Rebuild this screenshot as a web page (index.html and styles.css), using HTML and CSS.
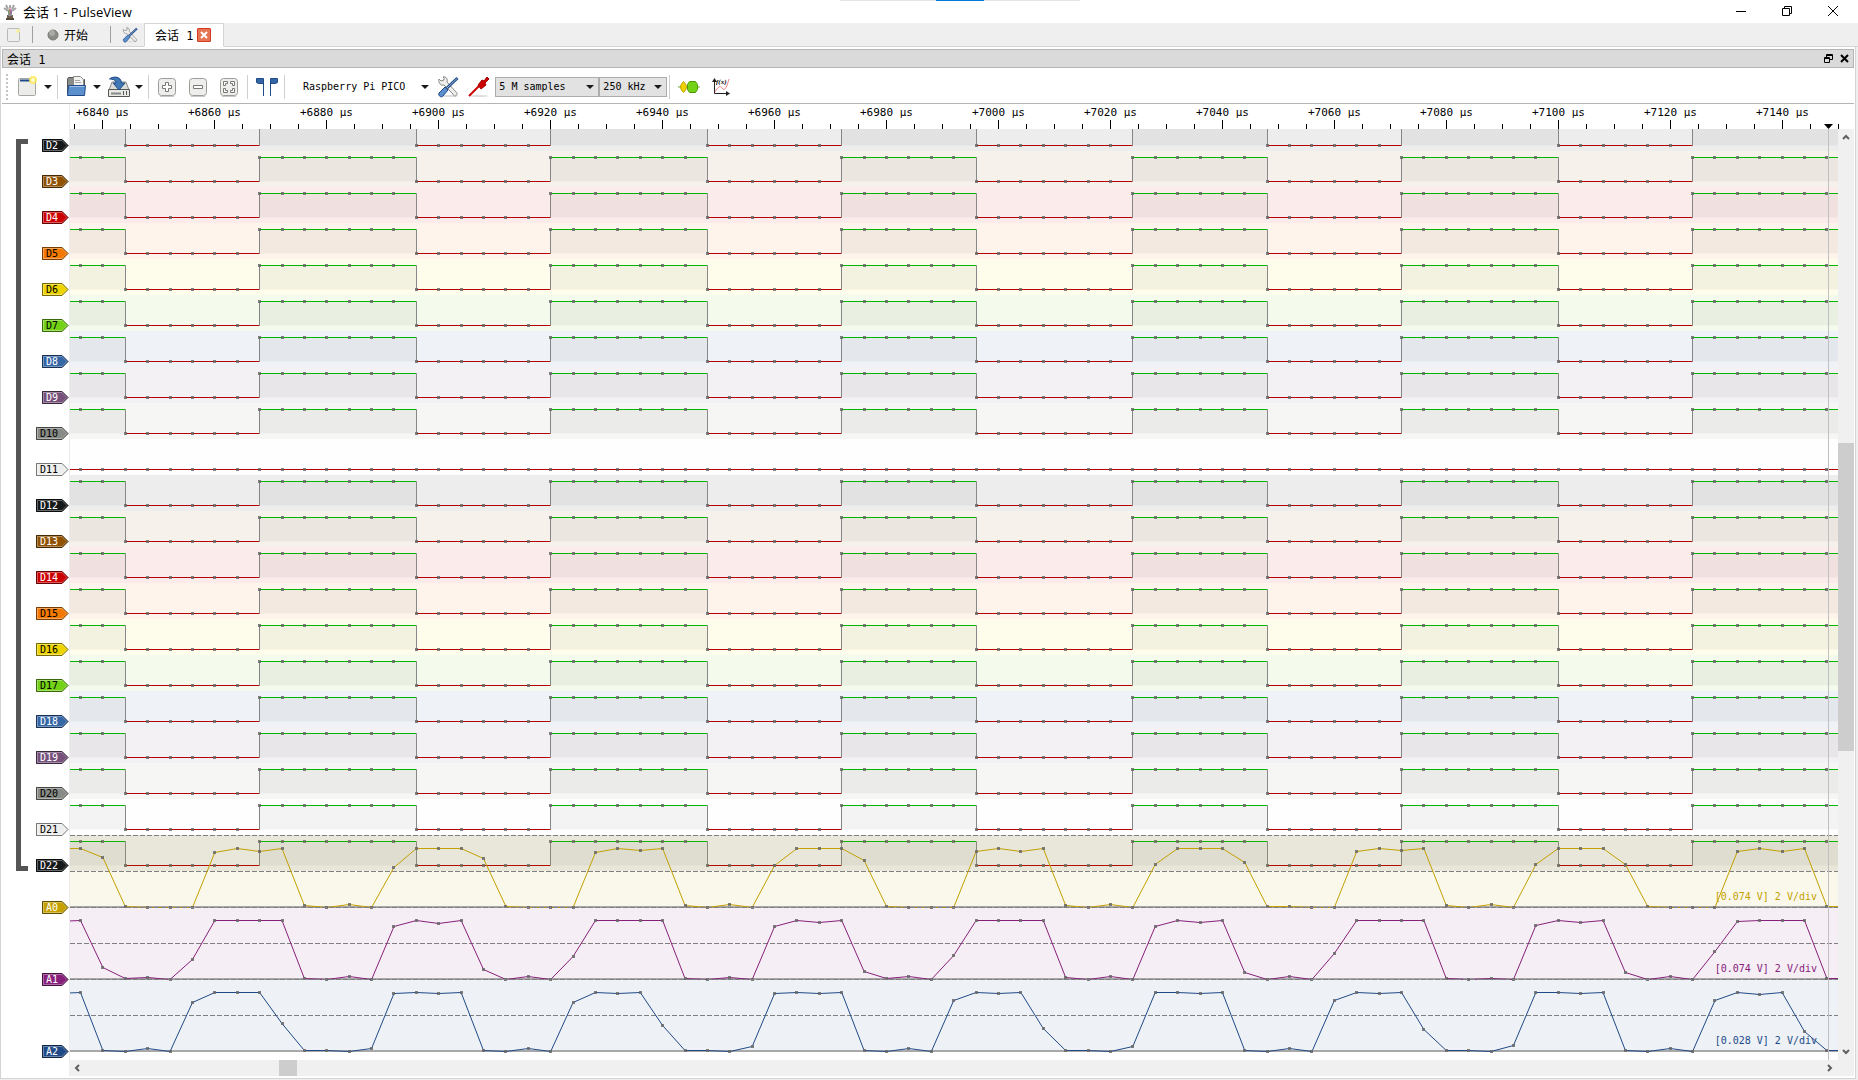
FILE: index.html
```html
<!DOCTYPE html>
<html lang="zh-CN">
<head>
  <meta charset="UTF-8">
  <meta name="viewport" content="width=device-width, initial-scale=1.0">
  <title>会话 1 - PulseView</title>
  <link rel="stylesheet" href="styles.css">
</head>
<body>
  <header class="titlebar">
    <svg class="app-icon" width="14" height="16" viewBox="0 0 14 16">
      <path d="M4 11h6v4H4z" fill="#6d5f50"/>
      <path d="M5 6h4v6H5z" fill="#8d8d8d"/>
      <path d="M6 5v5" stroke="#58b368" stroke-width="1"/>
      <path d="M7 4v6" stroke="#e0605a" stroke-width="1"/>
      <path d="M8 5v5" stroke="#9a62b8" stroke-width="1"/>
      <path d="M5 7L1 4M5 5L3 1M7 4V1M9 5l2-4M9 7l4-3" stroke="#a4a4a4" stroke-width="2" fill="none"/>
      <path d="M3 15h8" stroke="#5a4a3b" stroke-width="2"/>
    </svg>
    <h1>会话 1 - PulseView</h1>
    <div class="window-buttons">
      <button type="button" aria-label="Minimize"><svg width="10" height="10"><path d="M0 5.500h10" stroke="#000"/></svg></button>
      <button type="button" aria-label="Restore"><svg width="10" height="10" fill="none" stroke="#000"><path d="M.5 2.500h7v7h-7zM2.500 2.500v-2h7v7h-2"/></svg></button>
      <button type="button" aria-label="Close"><svg width="10" height="10" stroke="#000"><path d="M0 0l10 10M10 0L0 10"/></svg></button>
    </div>
    <div class="snap-bar"><span></span></div>
  </header>

  <nav class="tabs">
    <button type="button" class="tab-tool new-session" aria-label="New session">
      <svg width="14" height="14"><rect x=".5" y=".5" width="12" height="13" rx="1" fill="#eee" stroke="#b9b9b5"/><circle cx="11" cy="3" r="2" fill="#f7efa0"/></svg>
    </button>
    <span class="tab-sep"></span>
    <button type="button" class="tab-tool run">
      <svg width="12" height="12"><circle cx="6" cy="6" r="5" fill="#8b8d88" stroke="#777974"/><circle cx="5" cy="4" r="3" fill="#a9aba6"/></svg>
      开始
    </button>
    <span class="tab-sep"></span>
    <button type="button" class="tab-tool settings" aria-label="Settings">
      <svg width="16" height="16" viewBox="0 0 22 22"><use href="#tools"/></svg>
    </button>
    <div class="tab active">
      <span>会话 1</span>
      <button type="button" class="tab-close" aria-label="Close tab"><svg width="8" height="8"><path d="M1 1l6 6M7 1L1 7" stroke="#fff" stroke-width="2"/></svg></button>
    </div>
  </nav>

  <main class="session">
    <div class="dock-title">
      <h2>会话 1</h2>
      <button type="button" aria-label="Float"><svg width="9" height="9" fill="none" stroke="#000"><path d="M.5 3.500h5v5h-5zM.5 4.500h5M2.500 3V.5h6v5H6M2.500 1.500h6"/></svg></button>
      <button type="button" aria-label="Close"><svg width="9" height="9" stroke="#000" stroke-width="2"><path d="M1 1l7 7M8 1L1 8"/></svg></button>
    </div>

    <div class="toolbar">
      <span class="handle"></span>
      <button type="button" class="tool" aria-label="New view">
        <svg width="22" height="22"><rect x="1.500" y="2.500" width="17" height="17" rx="1" fill="#ecedeb" stroke="#a5a6a2"/><path d="M3 4.500h10" stroke="#204a87" stroke-width="2"/><circle cx="16" cy="4" r="4" fill="#fce94f" opacity=".8"/><circle cx="16" cy="4" r="2" fill="#fffbd0"/></svg>
      </button>
      <button type="button" class="drop" aria-label="More views"></button>
      <span class="sep"></span>
      <button type="button" class="tool" aria-label="Open">
        <svg width="22" height="22"><path d="M1.500 18.500V3l1-1.500h5l1 2h10v6" fill="#8a8c87" stroke="#555753"/><path d="M7.500 12V.5h7l3 3V12z" fill="#f2f2f0" stroke="#888a85"/><path d="M9 4.500h5M9 6.500h6" stroke="#aaa"/><path d="M2.500 9.500h17l-1 10h-17z" fill="#5c8fce" stroke="#204a87"/><path d="M3.500 10.500h15" stroke="#9cc0ea"/></svg>
      </button>
      <button type="button" class="drop" aria-label="Open options"></button>
      <button type="button" class="tool save" aria-label="Save">
        <svg width="22" height="22"><path d="M1 14l3-8h14l3 8z" fill="#dcddda" stroke="#888a85"/><path d="M.5 13.500h21v7H.5z" fill="#e8e8e6" stroke="#555753"/><path d="M3 17.500h10" stroke="#888" stroke-width="2"/><path d="M15.500 15v4M18.500 15v4" stroke="#555"/><path d="M1.500 3C5 0 13 0 13.500 7H17l-6 7-6-7h3C8 4 5 3 1.500 3z" fill="#3f78b5" stroke="#204a87"/></svg>
      </button>
      <button type="button" class="drop" aria-label="Save options"></button>
      <span class="sep"></span>
      <button type="button" class="tool" aria-label="Zoom in">
        <svg width="20" height="20"><use href="#key"/><path d="M8.500 5.500h3v3h3v3h-3v3h-3v-3h-3v-3h3z" fill="#fff" stroke="#777974"/></svg>
      </button>
      <button type="button" class="tool zoom" aria-label="Zoom out">
        <svg width="20" height="20"><use href="#key"/><path d="M5.500 8.500h9v3h-9z" fill="#fff" stroke="#777974"/></svg>
      </button>
      <button type="button" class="tool zoom" aria-label="Zoom to fit">
        <svg width="20" height="20"><use href="#key"/><path d="M4.500 8.500v-4h4v2h-2v2zM11.500 4.500h4v4h-2v-2h-2zM15.500 11.500v4h-4v-2h2v-2zM8.500 15.500h-4v-4h2v2h2z" fill="#fff" stroke="#777974"/></svg>
      </button>
      <span class="sep wide"></span>
      <button type="button" class="tool" aria-label="Show cursors">
        <svg width="22" height="20" fill="#3465a4" stroke="#204a87"><path d="M7.500 19V1.500h-7v4l2 1h5M14.500 19V1.500h7v4l-2 1h-5"/></svg>
      </button>
      <span class="sep near"></span>
      <button type="button" class="device">Raspberry Pi PICO</button>
      <button type="button" class="drop device-drop" aria-label="Select device"></button>
      <button type="button" class="tool" aria-label="Configure device">
        <svg width="22" height="22"><use href="#tools"/></svg>
      </button>
      <button type="button" class="tool probe" aria-label="Configure channels">
        <svg width="22" height="22"><ellipse cx="11" cy="20" rx="9" ry="1" fill="#ddd"/><path d="M1 20L12 9" stroke="#c00" stroke-width="2"/><path d="M10 9l4-5 2 1 3-4 2 2-4 4 1 2-5 4z" fill="#c00" stroke="#a40000"/></svg>
      </button>
      <span class="combo samples"><select aria-label="Sample count"><option>5 M samples</option></select></span>
      <span class="combo rate"><select aria-label="Sample rate"><option>250 kHz</option></select></span>
      <span class="sep tight"></span>
      <button type="button" class="tool" aria-label="Add decoder">
        <svg width="22" height="14"><path d="M0 7h22" stroke="#73a82b"/><path d="M5.500 1.500q-6 5.500 0 11q6-5.500 0-11z" fill="#edd400" stroke="#c4a000"/><path d="M11.500 1.500h6l2 3v5l-2 3h-6l-2-3v-5z" fill="#73d216" stroke="#4e9a06"/></svg>
      </button>
      <button type="button" class="tool math" aria-label="Add math channel">
        <svg width="18" height="18"><path d="M2.500 2v13.500H16" fill="none" stroke="#222"/><path d="M0 4l2.500-4L5 4zM14 13l4 2.500-4 2.500z" fill="#222"/><path d="M3 14c3-5 5-7 7-4s4 2 7-9" fill="none" stroke="#f08080"/><text x="4" y="6" class="fx">f(x)</text></svg>
      </button>
    </div>

    <div class="view">
      <div class="ruler-row">
        <div class="ruler"><svg id="ruler" width="100%" height="25"></svg></div>
      </div>
      <div class="trace-row">
        <div class="labels">
          <div class="group">
            <span class="bracket"></span>
            <div class="group-labels" id="digitalLabels"></div>
          </div>
          <div id="analogLabels"></div>
        </div>
        <div class="plot"><svg id="plot" width="100%" height="931"></svg></div>
        <div class="scroll vertical">
          <button type="button" aria-label="Scroll up"><svg width="10" height="8"><path d="M2 6l3-3 3 3" fill="none" stroke="#606060" stroke-width="2"/></svg></button>
          <div class="track"><span class="thumb"></span></div>
          <button type="button" aria-label="Scroll down"><svg width="10" height="8"><path d="M2 2l3 3 3-3" fill="none" stroke="#606060" stroke-width="2"/></svg></button>
        </div>
      </div>
      <div class="scroll horizontal">
        <button type="button" aria-label="Scroll left"><svg width="8" height="10"><path d="M6 2L3 5l3 3" fill="none" stroke="#606060" stroke-width="2"/></svg></button>
        <div class="track"><span class="thumb"></span></div>
        <button type="button" aria-label="Scroll right"><svg width="8" height="10"><path d="M2 2l3 3-3 3" fill="none" stroke="#606060" stroke-width="2"/></svg></button>
      </div>
    </div>
  </main>

  <svg class="defs" width="0" height="0">
    <defs>
      <g id="key"><rect x="1.500" y="1.500" width="17" height="17" rx="3" fill="#eeeeec" stroke="#9b9d98"/><path d="M3 19.500h14" stroke="#c8c8c6"/></g>
      <g id="tools">
        <ellipse cx="12" cy="20" rx="9" ry="1" fill="#ddd"/>
        <path d="M2 3l2 2 3-1V2L6 1c3-1 5 2 4 5l9 10c2 1 1 4-1 4-1 0-2-1-2-2L7 9C4 10 1 7 2 3z" fill="#eeeeec" stroke="#888a85"/>
        <path d="M20.500 2L10 12" stroke="#204a87" stroke-width="3"/>
        <path d="M20 2.500L10 12" stroke="#8fb4e0"/>
        <path d="M8 11l3 3-5 6c-2 2-5 0-4-3z" fill="#5c8fce" stroke="#204a87"/>
      </g>
    </defs>
  </svg>

  <script src="traces.js"></script>
</body>
</html>
```
FILE: styles.css
```css
* {
  margin: 0;
  padding: 0;
  box-sizing: border-box;
}

body {
  height: 100vh;
  display: flex;
  flex-direction: column;
  background: #efefef;
  color: #000;
  font-family: 'DejaVu Sans Mono', 'Noto Sans CJK SC', monospace;
  font-size: 10px;
  overflow: hidden;
}

button {
  display: flex;
  align-items: center;
  justify-content: center;
  border: none;
  background: none;
  font: inherit;
  color: inherit;
}

.defs {
  position: absolute;
}

/* Title bar */
.titlebar {
  position: relative;
  display: flex;
  align-items: center;
  height: 23px;
  padding-left: 3px;
  background: #fff;
}

.titlebar h1 {
  margin-left: 6px;
  font: 400 13px/16px 'Open Sans', 'Noto Sans CJK SC', sans-serif;
}

.window-buttons {
  display: flex;
  margin: 0 3px 2px auto;
}

.window-buttons button {
  width: 46px;
  height: 20px;
  padding-left: 1px;
}

.snap-bar {
  position: absolute;
  top: 0;
  left: 50%;
  width: 240px;
  margin-left: -89px;
  height: 1px;
  background: #e5e5e5;
}

.snap-bar span {
  display: block;
  width: 48px;
  height: 1px;
  margin: 0 auto;
  background: #0078d7;
}

/* Session tabs */
.tabs {
  display: flex;
  align-items: center;
  height: 24px;
  padding-left: 7px;
  border-bottom: 1px solid #d4d4d4;
  font-size: 12px;
}

.tab-sep {
  width: 1px;
  height: 17px;
  margin: 0 11px;
  background: #a0a0a0;
}

.tab-tool {
  gap: 5px;
}

.run {
  margin: 0 11px 0 3px;
}

.tab {
  display: flex;
  align-items: center;
  gap: 4px;
  height: 24px;
  margin-left: 6px;
  padding: 0 12px 0 10px;
  border: 1px solid #d4d4d4;
  border-bottom-color: #fff;
  background: #fff;
}

.tab-close {
  width: 14px;
  height: 14px;
  border: 1px solid #d63a24;
  border-radius: 1px;
  background: #e57553;
}

/* Session dock */
.session {
  flex: 1;
  display: flex;
  flex-direction: column;
  min-height: 0;
  margin: 0 2px 1px 0;
  padding: 2px 1px 2px 1px;
  border: 1px solid #d4d4d4;
  border-top: none;
  background: #fff;
}

.dock-title {
  display: flex;
  align-items: center;
  gap: 7px;
  height: 19px;
  padding: 0 4px;
  border: 1px solid #b4b4b4;
  background: #dadada;
}

.dock-title h2 {
  margin-right: auto;
  font-size: 12px;
  font-weight: 400;
}

/* Toolbar */
.toolbar {
  display: flex;
  align-items: center;
  height: 36px;
  padding: 2px 0 0 4px;
  border-bottom: 1px solid #b4b4b4;
}

.handle {
  width: 3px;
  height: 26px;
  margin-right: 8px;
  border-left: 2px dotted #c4c4c4;
}

.sep {
  width: 1px;
  height: 24px;
  margin-right: 8px;
  background: #cfcfcf;
}

.sep.wide {
  margin-left: 8px;
}

.sep.near {
  margin: 0 18px 0 6px;
}

.sep.tight {
  margin-left: 2px;
}

.drop {
  width: 18px;
  height: 22px;
}

.drop::after,
.combo::after {
  content: '';
  border: 4px solid transparent;
  border-top-color: #1a1a1a;
  border-bottom: none;
}

.save {
  margin-left: 2px;
}

.zoom {
  margin-left: 11px;
}

.device-drop {
  width: 32px;
  padding-left: 8px;
}

.probe {
  margin: 0 5px 0 9px;
}

.combo {
  position: relative;
  height: 20px;
}

.combo select {
  width: 100%;
  height: 20px;
  padding: 0 3px;
  border: 1px solid #acacac;
  border-radius: 0;
  background: #e2e2e2;
  color: #000;
  font: inherit;
  appearance: none;
}

.combo::after {
  position: absolute;
  top: 8px;
  right: 5px;
  pointer-events: none;
}

.samples {
  width: 104px;
}

.rate {
  width: 68px;
}

.math {
  margin-left: 12px;
}

.fx {
  font: italic 700 7px 'Liberation Serif', serif;
}

/* Trace view */
.view {
  flex: 1;
  display: flex;
  flex-direction: column;
  min-height: 0;
}

.ruler-row {
  padding-left: 67px;
}

.ruler {
  height: 25px;
  border-left: 1px solid #ececec;
  overflow: hidden;
}

.ruler text {
  font-size: 11px;
  text-anchor: middle;
}

.trace-row {
  flex: 1;
  display: flex;
  min-height: 0;
}

.labels {
  width: 67px;
  overflow: hidden;
}

.group {
  display: flex;
}

.bracket {
  width: 12px;
  margin: 10px 0 0 14px;
  border: 5px solid #555;
  border-right: none;
}

.group-labels {
  flex: 1;
}

.label-row {
  display: flex;
  align-items: flex-end;
  justify-content: flex-end;
  height: 36px;
}

.group-labels .label-row:first-child {
  height: 22px;
}

.label-row.analog {
  height: 72px;
}

.label-row.analog:first-child {
  height: 42px;
}

.label {
  height: 13px;
  margin-bottom: -1px;
}

.plot {
  flex: 1;
  min-width: 0;
  border-left: 1px solid #ececec;
  overflow: hidden;
}

.plot text {
  text-anchor: end;
}

.high {
  stroke: #00b400;
}

.low {
  stroke: #b40000;
}

.edge {
  stroke: #888;
}

.dot {
  fill: #696969;
  opacity: .85;
}

.division {
  stroke: #808080;
  stroke-dasharray: 5 2;
}

/* Scroll bars */
.scroll {
  display: flex;
  background: #f0f0f0;
}

.scroll button {
  width: 16px;
  height: 16px;
}

.track {
  flex: 1;
  display: flex;
}

.thumb {
  background: #cdcdcd;
}

.vertical {
  flex-direction: column;
  width: 16px;
}

.vertical .track {
  flex-direction: column;
}

.vertical .thumb {
  height: 308px;
  margin-top: 298px;
}

.horizontal {
  margin-left: 67px;
  padding-right: 16px;
}

.horizontal .thumb {
  width: 18px;
  margin-left: 194px;
}
```
FILE: traces.js
```js
const PITCH = 22.39;     // pixels between two samples
const FIRST = 10.5;      // x of the first sample
const LAST = 79;

const COLORS = ['#16191a', '#8f5202', '#cc0000', '#f57900', '#edd400',
  '#73d216', '#3465a4', '#75507b', '#888a85', '#eeeeec'];
const DARK_TEXT = ['#f57900', '#edd400', '#73d216', '#888a85', '#eeeeec'];

// sample numbers at which the digital channels toggle
const TOGGLES = [2, 8, 15, 21, 28, 34, 40, 47, 53, 59, 66, 72];

// heights over the base line, from sample -1 on
const ANALOG = [
  { name: 'A0', color: '#c4a000', range: '[0.074 V] 2 V/div', data: [
    59, 59, 50, 1, 0, 0, 0, 55, 59, 56, 59, 2, 0, 3, 0, 40, 59, 59, 59, 49, 1, 0, 0, 0, 55, 59, 57,
    59, 2, 0, 3, 0, 42, 59, 59, 59, 47, 1, 0, 0, 0, 56, 59, 56, 59, 2, 0, 3, 0, 43, 59, 59, 59, 45,
    1, 1, 0, 0, 56, 59, 57, 59, 2, 0, 3, 0, 43, 59, 59, 59, 43, 1, 0, 0, 0, 56, 59, 56, 59, 1, 1] },
  { name: 'A1', color: '#87207a', range: '[0.074 V] 2 V/div', data: [
    58, 59, 12, 1, 2, 0, 20, 59, 59, 59, 59, 1, 0, 3, 0, 53, 59, 56, 59, 10, 0, 3, 0, 23, 59, 59, 59,
    59, 1, 0, 2, 0, 53, 59, 57, 59, 8, 1, 3, 0, 24, 59, 59, 59, 59, 2, 0, 3, 0, 53, 59, 57, 59, 7,
    0, 3, 0, 26, 59, 59, 59, 59, 1, 0, 1, 0, 54, 59, 57, 59, 7, 0, 3, 0, 28, 58, 59, 59, 59, 1, 1] },
  { name: 'A2', color: '#204a87', range: '[0.028 V] 2 V/div', data: [
    58, 59, 1, 0, 3, 0, 49, 59, 59, 59, 28, 1, 1, 0, 3, 58, 59, 58, 59, 1, 0, 3, 0, 49, 59, 58, 59,
    26, 1, 1, 0, 5, 58, 59, 58, 59, 1, 0, 3, 0, 51, 59, 58, 59, 23, 1, 1, 0, 5, 59, 59, 58, 59, 1,
    0, 3, 0, 51, 59, 58, 59, 22, 1, 1, 0, 6, 59, 59, 58, 59, 1, 0, 3, 0, 51, 59, 57, 59, 20, 1, 1] }
];

const sampleX = k => FIRST + PITCH * k;
const edgeX = k => Math.floor(sampleX(k)) + 0.5;

function line(x1, y1, x2, y2, cls) {
  return `<line x1="${x1}" y1="${y1}" x2="${x2}" y2="${y2}" class="${cls}"/>`;
}

function dot(x, y) {
  return `<rect x="${Math.floor(x) - 1}" y="${Math.round(y - 1.5)}" width="3" height="3" class="dot"/>`;
}

function band(y, height, color) {
  return `<rect x="0" y="${y}" width="100%" height="${height}" fill="${color}" fill-opacity=".08"/>`;
}

function digital(index, color, flat) {
  const base = 16.5 + 36 * index;
  const top = base - 24;
  let out = band(36 * index - 14, 36, color);

  if (flat) {
    out += line(0, base, edgeX(LAST), base, 'low');
    for (let k = 0; k <= LAST; k++) out += dot(sampleX(k), base);
    return out;
  }

  const stops = [0, ...TOGGLES.map(edgeX), edgeX(LAST)];
  let dots = '';
  stops.slice(1).forEach((x, i) => {
    const high = i % 2 === 0;
    if (high) {
      out += `<rect x="${stops[i]}" y="${top}" width="${x - stops[i]}" height="24" fill-opacity=".045"/>`;
    }
    out += line(stops[i], high ? top : base, x, high ? top : base, high ? 'high' : 'low');
    if (i < TOGGLES.length) out += line(x, top, x, base, 'edge');
  });
  for (let k = 0; k <= LAST; k++) {
    const toggled = TOGGLES.filter(t => t <= k).length;
    dots += dot(sampleX(k), toggled % 2 ? base : top);
  }
  return out + dots;
}

function analog(trace, index) {
  const base = 778.5 + 72 * index;
  const points = trace.data.map((v, i) => [sampleX(i - 1), base - v]);
  return band(base - 72.5, 72, trace.color)
    + line(0, base - 72, '100%', base - 72, 'division')
    + line(0, base - 36, '100%', base - 36, 'division')
    + `<rect x="0" y="${base - 1.5}" width="100%" height="2" fill="#a8a8a8"/>`
    + `<polyline points="${points.join(' ')}" fill="none" stroke="${trace.color}"/>`
    + points.map(p => dot(p[0], p[1])).join('')
    + `<text x="100%" dx="-21" y="${base - 8}" fill="${trace.color}">${trace.range}</text>`;
}

function label(name, color, cls) {
  const w = 15 + 6 * name.length;
  const ink = DARK_TEXT.includes(color) ? '#000' : '#fff';
  const shape = `M.5.5H${w - 7}l6 6-6 6H.5z`;
  return `<div class="label-row ${cls}"><button type="button" class="label">
    <svg width="${w}" height="13">
      <path d="${shape}" fill="${color}" stroke="${color}"/>
      <path d="M1.500 11.500v-10H${w - 7}l5 5-5 5z" fill="none" stroke="#fff" stroke-opacity=".35"/>
      <path d="${shape}" fill="none" stroke="#000" stroke-opacity=".5"/>
      <text x="4" y="10" fill="${ink}">${name}</text>
    </svg></button></div>`;
}

function drawRuler() {
  let out = '';
  for (let i = 0; i < 64; i++) {
    const x = 4.5 + 28 * i;
    const major = i % 4 === 1;
    out += `<path d="M${x} ${major ? 16 : 20}V25" stroke="#000"/>`;
    if (major) out += `<text x="${x}" y="12">+${6840 + 5 * (i - 1)} μs</text>`;
  }
  out += '<path d="M1754 20h9l-4.500 5z"/>';
  document.getElementById('ruler').innerHTML = out;
}

function drawPlot() {
  let out = '';
  let labels = '';
  for (let i = 0; i <= 20; i++) {
    const color = COLORS[i % 10];
    out += digital(i, color, i === 9);
    labels += label('D' + (i + 2), color, '');
  }
  out += ANALOG.map(analog).join('');
  out += '<path d="M1758.500 0V931" stroke="#c0c0c0"/>';
  document.getElementById('plot').innerHTML = out;
  document.getElementById('digitalLabels').innerHTML = labels;
  document.getElementById('analogLabels').innerHTML = ANALOG
    .map(t => label(t.name, t.color, 'analog')).join('');
}

drawRuler();
drawPlot();
```
